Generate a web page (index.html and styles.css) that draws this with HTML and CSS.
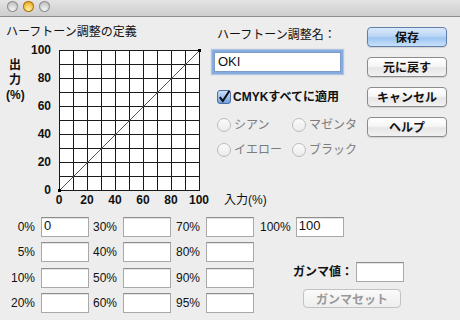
FILE: index.html
```html
<!DOCTYPE html>
<html lang="ja">
<head>
<meta charset="utf-8">
<title>ハーフトーン調整</title>
<link rel="stylesheet" href="styles.css">
</head>
<body>
<div class="window">
  <div class="titlebar">
    <span class="light"></span><span class="light light-min"></span><span class="light"></span>
  </div>
  <div class="top">
    <section class="graph-panel">
      <div class="panel-title">ハーフトーン調整の定義</div>
      <div class="chart-row">
        <div class="axis-title">出<br>力<br>(%)</div>
        <div class="y-ticks"><span>100</span><span>80</span><span>60</span><span>40</span><span>20</span><span>0</span></div>
        <div class="chart-col">
          <svg class="chart" width="141" height="141" viewBox="0 0 141 141">
            <rect x="0" y="0" width="141" height="141" fill="#fff"/>
            <path d="M0.5 0V141M14.5 0V141M28.5 0V141M42.5 0V141M56.5 0V141M70.5 0V141M84.5 0V141M98.5 0V141M112.5 0V141M126.5 0V141M140.5 0V141M0 0.5H141M0 14.5H141M0 28.5H141M0 42.5H141M0 56.5H141M0 70.5H141M0 84.5H141M0 98.5H141M0 112.5H141M0 126.5H141M0 140.5H141" stroke="#1a1a1a" stroke-width="1" fill="none"/>
            <path d="M0.5 140.5L140.5 0.5" stroke="#555" stroke-width="1" fill="none"/>
            <rect x="-1" y="139" width="3" height="3" fill="#000"/>
            <rect x="139" y="-1" width="3" height="3" fill="#000"/>
          </svg>
          <div class="x-ticks"><span>0</span><span>20</span><span>40</span><span>60</span><span>80</span><span>100</span><span class="x-title">入力(%)</span></div>
        </div>
      </div>
    </section>
    <section class="name-panel">
      <div class="field-label">ハーフトーン調整名：</div>
      <div class="field name-input">OKI</div>
      <div class="check-row">
        <svg class="checkbox" width="14" height="14" viewBox="0 0 14 14">
          <defs><linearGradient id="cb" x1="0" y1="0" x2="0" y2="1"><stop offset="0" stop-color="#cfe1f8"/><stop offset="0.5" stop-color="#9fc2ee"/><stop offset="1" stop-color="#6b9de0"/></linearGradient></defs>
          <rect x="0.5" y="0.5" width="13" height="13" rx="2.5" fill="url(#cb)" stroke="#4d70a4"/>
          <path d="M2.8 7.2L5.8 11L12.5 0.8" fill="none" stroke="#111" stroke-width="2"/>
        </svg>
        <span class="check-label">CMYKすべてに適用</span>
      </div>
      <div class="radio-grid">
        <div class="radio-item"><span class="radio"></span>シアン</div>
        <div class="radio-item"><span class="radio"></span>マゼンタ</div>
        <div class="radio-item"><span class="radio"></span>イエロー</div>
        <div class="radio-item"><span class="radio"></span>ブラック</div>
      </div>
    </section>
    <section class="button-panel">
      <div class="btn btn-default">保存</div>
      <div class="btn">元に戻す</div>
      <div class="btn">キャンセル</div>
      <div class="btn">ヘルプ</div>
    </section>
  </div>
  <div class="bottom">
    <div class="value-grid">
      <span class="pct">0%</span><div class="field">0</div>
      <span class="pct">30%</span><div class="field"></div>
      <span class="pct">70%</span><div class="field"></div>
      <span class="pct">5%</span><div class="field"></div>
      <span class="pct">40%</span><div class="field"></div>
      <span class="pct">80%</span><div class="field"></div>
      <span class="pct">10%</span><div class="field"></div>
      <span class="pct">50%</span><div class="field"></div>
      <span class="pct">90%</span><div class="field"></div>
      <span class="pct">20%</span><div class="field"></div>
      <span class="pct">60%</span><div class="field"></div>
      <span class="pct">95%</span><div class="field"></div>
    </div>
    <div class="value-side">
      <div class="side-row"><span class="pct-side">100%</span><div class="field">100</div></div>
      <div class="gamma-row"><span class="gamma-label">ガンマ値：</span><div class="field"></div></div>
      <div class="btn btn-disabled gamma-btn">ガンマセット</div>
    </div>
  </div>
</div>
</body>
</html>
```

FILE: styles.css
```css
* { box-sizing: border-box; }
html, body { margin: 0; padding: 0; }
body {
  width: 460px;
  height: 320px;
  overflow: hidden;
  background: #ededed;
  font-family: "Liberation Sans", "Noto Sans CJK JP", sans-serif;
  font-size: 12px;
  color: #111;
}
.titlebar {
  height: 17px;
  display: flex;
  gap: 5px;
  padding: 1px 0 0 7px;
  background: linear-gradient(#e4e4e4, #cdcdcd);
  border-bottom: 1px solid #8e8e8e;
}
.light {
  width: 11px;
  height: 11px;
  border-radius: 50%;
  background: radial-gradient(circle at 50% 75%, #f4f4f4, #cbcbcb 55%, #a8a8a8);
  box-shadow: inset 0 0 0 1px #8f8f8f;
}
.light-min {
  background: radial-gradient(circle at 50% 75%, #fff1a8, #f3bd3c 55%, #c98b12);
  box-shadow: inset 0 0 0 1px #a8731c;
}
.top { display: flex; align-items: flex-start; }
.graph-panel { width: 212px; flex: none; }
.panel-title { margin: 8px 0 0 6px; line-height: 14px; }
.chart-row { display: flex; align-items: flex-start; margin-top: 4px; padding-left: 6px; }
.axis-title { width: 18px; padding-top: 15px; line-height: 15px; text-align: center; font-weight: bold; }
.y-ticks { width: 27px; display: flex; flex-direction: column; gap: 14px; text-align: right; font-weight: bold; }
.y-ticks span { display: block; height: 14px; line-height: 14px; }
.chart-col { width: 141px; flex: none; margin: 7px 0 0 8px; }
.chart { display: block; overflow: visible; }
.x-ticks { display: flex; margin: 2px 0 0 -14px; line-height: 14px; white-space: nowrap; width: 260px; }
.x-ticks span { width: 28px; flex: none; text-align: center; font-weight: bold; }
.x-ticks .x-title { width: auto; margin-left: 11px; font-weight: normal; }

.name-panel { width: 155px; flex: none; padding-top: 11px; }
.field-label { margin-left: 5px; line-height: 14px; }
.field {
  background: #fff;
  border: 1px solid #a9a9a9;
  border-top-color: #8e8e8e;
  box-shadow: inset 0 1px 0 #e4e4e4;
  height: 20px;
  width: 48px;
  font-size: 13px;
  line-height: 16px;
  padding-left: 2px;
}
.name-input {
  margin: 10px 0 0 2px;
  width: 127px;
  border-color: #7d9cc8;
  box-shadow: 0 0 0 2px #86acdf, 0 0 1px 3px rgba(120, 160, 220, 0.5);
  padding-left: 3px;
  line-height: 17px;
}
.check-row { display: flex; align-items: center; gap: 2px; margin-top: 18px; padding-left: 5px; height: 14px; }
.checkbox { display: block; overflow: visible; flex: none; }
.check-label { line-height: 14px; font-weight: bold; }
.radio-grid {
  display: grid;
  grid-template-columns: 75px 75px;
  grid-auto-rows: 14px;
  row-gap: 11px;
  margin-top: 14px;
  padding-left: 5px;
}
.radio-item { display: flex; align-items: center; gap: 3px; line-height: 14px; color: #7c7c7c; }
.radio {
  width: 14px;
  height: 14px;
  flex: none;
  border-radius: 50%;
  border: 1px solid #bcbcbc;
  background: linear-gradient(#fbfbfb, #ebebeb);
}

.button-panel { display: flex; flex-direction: column; gap: 10px; padding-top: 10px; }
.btn {
  width: 80px;
  height: 20px;
  border: 1px solid #8c8c8c;
  border-radius: 4px;
  background: linear-gradient(#ffffff, #f6f6f6 45%, #e6e6e6 55%, #f2f2f2);
  box-shadow: 0 1px 1px rgba(0, 0, 0, 0.12);
  font-family: "Noto Sans CJK JP", sans-serif;
  font-weight: bold;
  font-size: 12px;
  line-height: 18px;
  text-align: center;
  color: #111;
}
.btn-default {
  border-color: #5f7fac;
  background: linear-gradient(#dbe9fa, #bcd6f5 45%, #9cc4f0 55%, #c9e1fb);
}
.btn-disabled {
  border-color: #c2c2c2;
  color: #9a9a9a;
  background: linear-gradient(#fafafa, #eeeeee);
  box-shadow: none;
}

.bottom { display: flex; align-items: flex-start; margin-top: 10px; }
.value-grid {
  display: grid;
  grid-template-columns: 41px 48px 34px 49px 34px 48px;
  grid-auto-rows: 20px;
  row-gap: 5.33px;
}
.pct { text-align: right; padding-right: 6px; line-height: 20px; }
.value-side { padding-left: 6px; display: flex; flex-direction: column; align-items: flex-start; }
.side-row { display: flex; align-items: center; gap: 5px; }
.pct-side { line-height: 20px; }
.gamma-row { display: flex; align-items: center; gap: 3px; margin: 25px 0 0 33px; }
.gamma-label { line-height: 20px; font-weight: bold; }
.gamma-btn { width: 98px; height: 19px; line-height: 17px; margin: 7px 0 0 43px; }
```
